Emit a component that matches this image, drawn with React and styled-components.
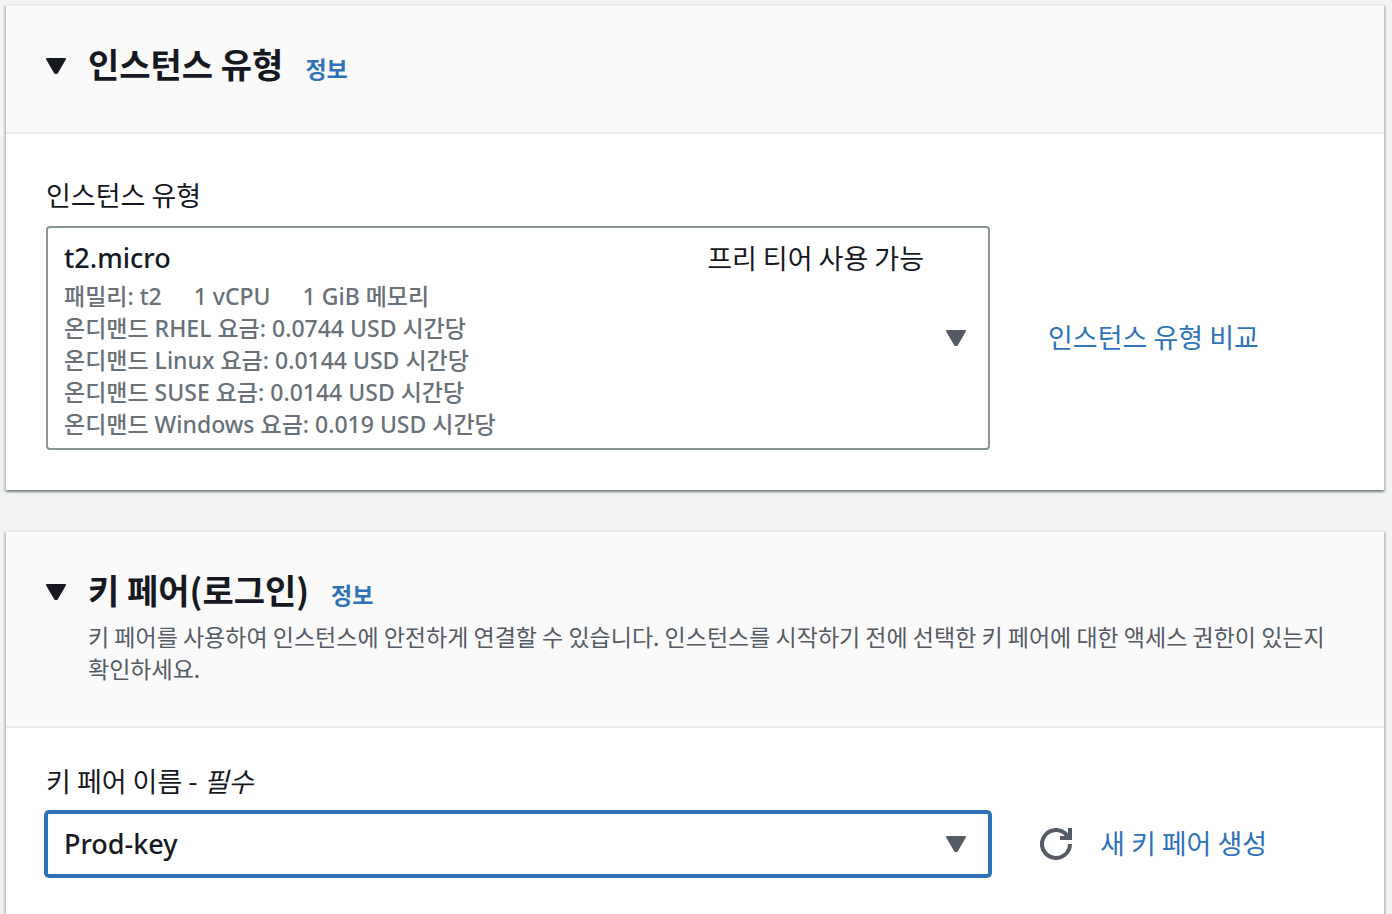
import * as React from "react"
import styled, { createGlobalStyle } from "styled-components"

const GlobalStyle = createGlobalStyle`
  * {
    box-sizing: border-box;
  }

  html {
    scrollbar-width: none;
  }

  body {
    margin: 0;
    background: #f2f3f3;
    color: #16191f;
    font-family: "Noto Sans CJK KR", "Noto Sans", sans-serif;
    font-size: 27px;
  }

  button,
  select {
    font: inherit;
    color: inherit;
  }
`

const Page = styled.main`
  display: flex;
  flex-direction: column;
  gap: 40px;
  padding: 4px 8px 40px 6px;
`

const Panel = styled.section`
  background: #fff;
  border-top: 2px solid #eaeded;
  box-shadow: 0 2px 2px 0 rgba(0, 28, 36, 0.3),
    2px 2px 2px 0 rgba(0, 28, 36, 0.15), -2px 2px 2px 0 rgba(0, 28, 36, 0.15);
`

const PanelHeader = styled.header`
  display: grid;
  grid-template-columns: 20px 1fr;
  column-gap: 22px;
  padding: 36px 40px 42px;
  background: #fafafa;
  border-bottom: 2px solid #eaeded;
`

const Toggle = styled.button`
  display: flex;
  align-items: center;
  height: 48px;
  padding: 0;
  border: 0;
  background: none;
`

const TitleRow = styled.div`
  display: flex;
  align-items: baseline;
  gap: 22px;
  height: 48px;
`

const Title = styled.h2`
  margin: 0;
  font-size: 34px;
  line-height: 44px;
`

const InfoLink = styled.a`
  color: #2e73b8;
  font-size: 23px;
  font-weight: 700;
  line-height: 32px;
  text-decoration: none;
`

const Description = styled.p`
  grid-column: 2;
  margin: 4px 0 0;
  color: #545b64;
  font-size: 23px;
  line-height: 32px;
`

const PanelBody = styled.div`
  padding: ${({ $top }) => $top}px 40px 40px;
`

const Label = styled.label`
  display: block;
  margin-bottom: 10px;
  line-height: 42px;
`

const FieldRow = styled.div`
  display: grid;
  grid-template-columns: 8fr 3fr;
  align-items: center;
`

const InstanceButton = styled.button`
  display: flex;
  align-items: center;
  gap: 22px;
  padding: 8px 22px 8px 16px;
  border: 2px solid #879596;
  border-radius: 4px;
  background: #fff;
  text-align: left;
`

const InstanceDetails = styled.span`
  flex: 1;
  font-family: "Noto Sans", "Noto Sans CJK KR", sans-serif;
  font-weight: 500;
`

const InstanceName = styled.span`
  display: flex;
  justify-content: space-between;
  line-height: 44px;
`

const FreeTier = styled.span`
  font-family: "Noto Sans CJK KR", "Noto Sans", sans-serif;
  font-weight: 400;
`

const Spec = styled.span`
  display: flex;
  gap: 32px;
  color: #687078;
  font-size: 23px;
  line-height: 32px;
`

const SelectWrap = styled.div`
  display: grid;
  align-items: center;

  > * {
    grid-area: 1 / 1;
  }

  > svg {
    justify-self: end;
    margin-right: 24px;
    pointer-events: none;
  }
`

const Select = styled.select`
  width: 100%;
  height: 64px;
  padding: 0 64px 2px 16px;
  appearance: none;
  border: 2px solid #2e73b8;
  border-radius: 3px;
  outline: 0;
  box-shadow: 0 0 0 2px #2e73b8;
  background: #fff;
  font-family: "Noto Sans", "Noto Sans CJK KR", sans-serif;
  font-weight: 500;
`

const Actions = styled.div`
  display: flex;
  align-items: center;
  gap: 28px;
  padding-left: ${({ $left }) => $left}px;
`

const IconButton = styled.button`
  display: flex;
  padding: 0;
  border: 0;
  background: none;
`

const ActionLink = styled.a`
  padding-bottom: 2px;
  color: #2e73b8;
  line-height: 44px;
  text-decoration: none;
  white-space: nowrap;
`

const Caret = ({ color = "#545b64" }) => (
  <svg width="20" height="16" viewBox="0 0 20 16" aria-hidden="true">
    <path
      d="M1 1h18l-8.2 14h-1.6z"
      fill={color}
      stroke={color}
      strokeWidth="2"
      strokeLinejoin="round"
    />
  </svg>
)

const RefreshIcon = () => (
  <svg width="32" height="32" viewBox="0 0 32 32" aria-hidden="true">
    <path
      d="M30 16a14 14 0 1 1-4.6-10.4L29 9.6"
      fill="none"
      stroke="#545b64"
      strokeWidth="4"
    />
    <path d="M28 0h4v12H20V8h8z" fill="#545b64" />
  </svg>
)

const PanelHeading = ({ title, children }) => (
  <PanelHeader>
    <Toggle type="button" aria-expanded="true" aria-label={title}>
      <Caret color="#16191f" />
    </Toggle>
    <TitleRow>
      <Title>{title}</Title>
      <InfoLink href="#info">정보</InfoLink>
    </TitleRow>
    {children && <Description>{children}</Description>}
  </PanelHeader>
)

const prices = [
  ["RHEL", "0.0744"],
  ["Linux", "0.0144"],
  ["SUSE", "0.0144"],
  ["Windows", "0.019"],
]

const InstanceTypePanel = () => (
  <Panel>
    <PanelHeading title="인스턴스 유형" />
    <PanelBody $top={40}>
      <Label htmlFor="instance-type">인스턴스 유형</Label>
      <FieldRow>
        <InstanceButton
          id="instance-type"
          type="button"
          aria-haspopup="listbox"
        >
          <InstanceDetails>
            <InstanceName>
              <span>t2.micro</span>
              <FreeTier>프리 티어 사용 가능</FreeTier>
            </InstanceName>
            <Spec>
              <span>패밀리: t2</span>
              <span>1 vCPU</span>
              <span>1 GiB 메모리</span>
            </Spec>
            {prices.map(([os, price]) => (
              <Spec key={os}>{`온디맨드 ${os} 요금: ${price} USD 시간당`}</Spec>
            ))}
          </InstanceDetails>
          <Caret />
        </InstanceButton>
        <Actions $left={58}>
          <ActionLink href="#compare">인스턴스 유형 비교</ActionLink>
        </Actions>
      </FieldRow>
    </PanelBody>
  </Panel>
)

const KeyPairPanel = () => (
  <Panel>
    <PanelHeading title="키 페어(로그인)">
      키 페어를 사용하여 인스턴스에 안전하게 연결할 수 있습니다. 인스턴스를
      시작하기 전에 선택한 키 페어에 대한 액세스 권한이 있는지 확인하세요.
    </PanelHeading>
    <PanelBody $top={32}>
      <Label htmlFor="key-pair">
        키 페어 이름 - <em>필수</em>
      </Label>
      <FieldRow>
        <SelectWrap>
          <Select id="key-pair" defaultValue="Prod-key">
            <option>Prod-key</option>
          </Select>
          <Caret />
        </SelectWrap>
        <Actions $left={50}>
          <IconButton type="button" aria-label="새로 고침">
            <RefreshIcon />
          </IconButton>
          <ActionLink href="#create">새 키 페어 생성</ActionLink>
        </Actions>
      </FieldRow>
    </PanelBody>
  </Panel>
)

const App = () => (
  <>
    <GlobalStyle />
    <Page>
      <InstanceTypePanel />
      <KeyPairPanel />
    </Page>
  </>
)

export default App
